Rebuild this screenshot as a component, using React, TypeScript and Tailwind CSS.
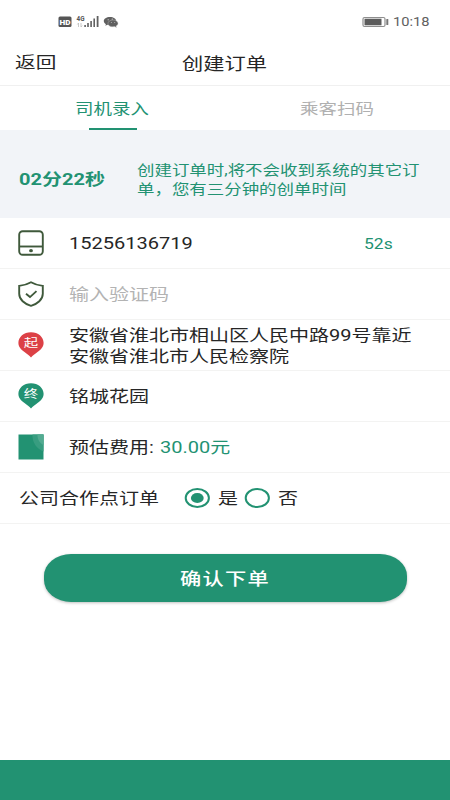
import type { ReactNode } from "react";
import clsx from "clsx";

const GREEN = "#229272";

function T({
  children,
  className,
  centered,
  scale = "scale-x-125",
}: {
  children: ReactNode;
  className?: string;
  centered?: boolean;
  scale?: string;
}) {
  return (
    <span className={clsx("block whitespace-nowrap", scale, centered ? "origin-center" : "origin-left", className)}>
      {children}
    </span>
  );
}

function Row({ icon, children }: { icon: ReactNode; children: ReactNode }) {
  return (
    <div className="flex h-[51px] shrink-0 items-center border-b border-[#f3f3f2] pl-[18px]">
      <div className="flex w-[51px] shrink-0">{icon}</div>
      <div className="flex pt-[2px]">{children}</div>
    </div>
  );
}

function Pin({ color, label }: { color: string; label: string }) {
  return (
    <svg width="26" height="26" viewBox="0 0 26 26">
      <path d="M13 .2C5.800.2.4 4.900.4 10.700c0 4 2.300 6.500 6.100 9.300 2.700 2 4.700 3.600 6.500 5.500 1.800-1.900 3.800-3.500 6.500-5.500 3.800-2.800 6.100-5.300 6.100-9.300C25.600 4.900 20.200.2 13 .2Z" fill={color} />
      <text x="10.300" y="15.200" textAnchor="middle" fontSize="11.500" fill="#fff" transform="scale(1.25 1)">
        {label}
      </text>
    </svg>
  );
}

function Radio({ checked }: { checked?: boolean }) {
  return (
    <svg width="26" height="20" viewBox="0 0 26 20">
      <ellipse cx="13.300" cy="10" rx="11.600" ry="9" fill="none" stroke={GREEN} strokeWidth="2" />
      {checked && <ellipse cx="13.300" cy="10" rx="6.400" ry="5.100" fill={GREEN} />}
    </svg>
  );
}

function StatusBar() {
  return (
    <div className="flex h-[43px] shrink-0 items-center pl-[58px] text-[#606060]">
      <svg width="62" height="16" viewBox="58 14 62 16">
        <rect x="58.500" y="16.500" width="13" height="10.500" rx="1.500" fill="#555" />
        <text x="59.500" y="24.800" fontSize="8" fontWeight="900" fill="#fff" textLength="11" lengthAdjust="spacingAndGlyphs">HD</text>
        <text x="76.500" y="20.800" fontSize="6.500" fontWeight="700" fill="#555" textLength="8" lengthAdjust="spacingAndGlyphs">4G</text>
        <path d="M78.500 27v-4l-1.200 1.500M81 23v4l1.200-1.500" fill="none" stroke="#bbb" strokeWidth=".8" />
        <path d="M84.300 25h1.600v2h-1.600zM87.200 23h1.600v4h-1.600zM90.300 21h1.600v6h-1.600zM93.400 18.500H95V27h-1.600zM96.700 16h1.800v11h-1.800z" fill="#606060" />
        <path d="M110 17c-3.600 0-6.200 1.800-6.200 4.100 0 1.300.8 2.500 2.100 3.200l-.6 1.500 2.200-1c.8.200 1.600.3 2.500.3 3.500 0 6.200-1.800 6.200-4S113.500 17 110 17Z" fill="#606060" />
        <path d="M113 20c-2.900 0-5 1.500-5 3.400s2.100 3.400 4.900 3.400l1.600-.2 2 .9-.5-1.500c1.300-.7 2-1.500 2-2.600 0-1.900-2.200-3.400-5-3.400Z" fill="#606060" stroke="#ccc" strokeWidth=".4" />
        <g fill="#ddd">
          <ellipse cx="108.200" cy="19.700" rx=".7" ry=".5" />
          <ellipse cx="112.300" cy="19" rx=".7" ry=".5" />
          <ellipse cx="111.400" cy="22.700" rx=".6" ry=".4" />
          <ellipse cx="114.700" cy="22.700" rx=".6" ry=".4" />
        </g>
      </svg>
      <svg className="ml-[242px]" width="27" height="12" viewBox="0 0 27 12">
        <rect x="1" y="1.500" width="22" height="9" rx="1.500" fill="#fff" stroke="#8e8e8e" strokeWidth="1.200" />
        <rect x="2.500" y="2.700" width="17" height="6.600" fill="#5c5c5c" />
        <rect x="24.300" y="3" width="2" height="6" rx=".5" fill="#777" />
      </svg>
      <T className="ml-1 mt-px text-[13px]" scale="scale-x-[1.130]">10:18</T>
    </div>
  );
}

export default function App() {
  return (
    <div className="flex h-[800px] w-[450px] flex-col overflow-hidden bg-white font-[Roboto,'Noto_Sans_CJK_SC',sans-serif] text-[16px] leading-[20px] text-[#262626]">
      <StatusBar />
      <header className="flex h-[43px] shrink-0 items-center border-b border-[#f0f0f0] pb-[2px] pl-[15px]">
        <T className="w-[167px]" scale="scale-x-[1.290]">返回</T>
        <T className="pt-px text-[17px]">创建订单</T>
      </header>

      <nav className="flex h-[44px] shrink-0 text-[15px]">
        <div className="flex w-[225px] flex-col items-center pt-[13px] text-[#229272]">
          <T centered scale="scale-x-[1.230]">司机录入</T>
          <div className="mt-auto h-[2px] w-12 bg-[#229272]" />
        </div>
        <div className="flex w-[225px] flex-col items-center pt-[13px] text-[#b0b0b0]">
          <T centered scale="scale-x-[1.230]">乘客扫码</T>
        </div>
      </nav>

      <section className="flex h-[88px] shrink-0 items-center bg-[#f2f4f8] pl-[19px] pt-[11px] text-[#229272]">
        <T className="w-[118px] font-bold">02分22秒</T>
        <T className="text-[14px] leading-[18.500px]" scale="scale-x-[1.246]">
          创建订单时,将不会收到系统的其它订
          <br />
          单，您有三分钟的创单时间
        </T>
      </section>

      <Row
        icon={
          <svg width="26" height="26" viewBox="0 0 26 26" fill="none" stroke="#3f593b" strokeWidth="1.900">
            <rect x="1.200" y="1.200" width="23.600" height="23.600" rx="3.500" />
            <path d="M1.200 16.500h23.600" />
            <ellipse cx="13" cy="20.700" rx="1.900" ry="1.600" fill="#3f593b" stroke="none" />
          </svg>
        }
      >
        <T className="w-[295px]">15256136719</T>
        <T className="text-[14px] text-[#229272]">52s</T>
      </Row>
      <Row
        icon={
          <svg width="26" height="26" viewBox="0 0 26 26" fill="none" stroke="#3f593b" strokeWidth="1.900">
            <path d="M13 1.300C9.800 3.200 5.500 4.500 1.200 4.900v7.800C1.200 18.500 6.500 23 13 24.800 19.500 23 24.800 18.500 24.800 12.700V4.900C20.500 4.500 16.200 3.200 13 1.300Z" />
            <path d="m8 12.800 4 3.300 6.500-6" />
          </svg>
        }
      >
        <T className="text-[#b3b3b3]">输入验证码</T>
      </Row>
      <Row icon={<Pin color="#dc4146" label="起" />}>
        <T className="leading-[21px]">
          安徽省淮北市相山区人民中路99号靠近
          <br />
          安徽省淮北市人民检察院
        </T>
      </Row>
      <Row icon={<Pin color={GREEN} label="终" />}>
        <T>铭城花园</T>
      </Row>
      <Row
        icon={
          <svg width="26" height="26" viewBox="0 0 26 26">
            <path d="M.5.500h25v25H.5z" fill={GREEN} />
            <path d="M14.500.5c-.5 7.500 4 14.500 11 17V.5Z" fill="#389d80" />
            <path d="M19.500.5c-.3 4.500 2 8.500 6 10.500V.5Z" fill="#53ab91" />
          </svg>
        }
      >
        <T className="w-[91px]">预估费用:</T>
        <T className="text-[#229272]">30.00元</T>
      </Row>
      <div className="flex h-[51px] shrink-0 items-center border-b border-[#f3f3f2] pl-[19px]">
        <T className="w-[165px] pt-[2px]">公司合作点订单</T>
        <Radio checked />
        <T className="ml-[7.500px] w-[26.500px] pt-[2px]">是</T>
        <Radio />
        <T className="ml-[8px] pt-[2px]">否</T>
      </div>

      <button className="ml-[43.500px] mt-[30px] flex h-[48px] w-[363px] shrink-0 items-center justify-center rounded-[27px/22px] bg-[#229272] pt-[2px] font-medium text-white shadow-[0_1px_3px_rgba(0,0,0,0.250)]">
        <T centered className="text-[17px] tracking-[1px]">确认下单</T>
      </button>

      <footer className="mt-auto h-10 shrink-0 bg-[#229272]" />
    </div>
  );
}
